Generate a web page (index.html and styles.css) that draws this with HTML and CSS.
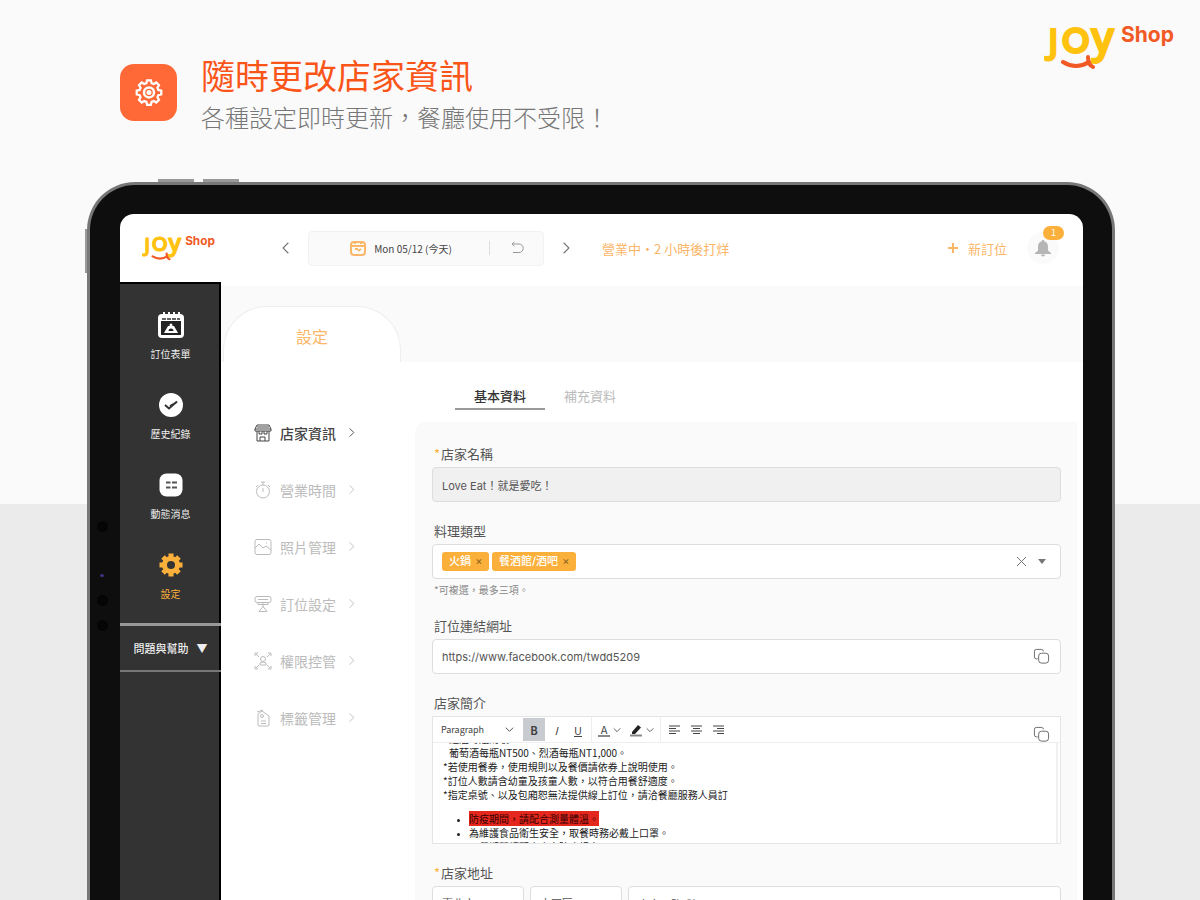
FILE: index.html
```
<!DOCTYPE html>
<html lang="zh-Hant">
<head>
  <meta charset="UTF-8">
  <meta name="viewport" content="width=device-width, initial-scale=1.0">
  <title>JOY Shop</title>
  <link rel="stylesheet" href="styles.css">
</head>
<body>
  <svg class="sprite" aria-hidden="true">
    <symbol id="logo" viewBox="0 0 132 46">
      <g class="logo-joy">
        <text x="4" y="30" font-size="35">J</text>
        <text class="logo-o" x="18" y="29" font-size="34">O</text>
        <text x="47" y="29" font-size="43">y</text>
      </g>
      <path class="logo-smile" d="M19 38 Q32 46 45 38 M44 33 Q44 41 49 43"/>
      <text class="logo-shop" x="77" y="18" font-size="21">Shop</text>
    </symbol>
    <symbol id="chevron" viewBox="0 0 12 12"><path d="M4 1.5 L8.5 6 L4 10.5"/></symbol>
    <symbol id="down" viewBox="0 0 12 12"><path d="M2 4 L6 8 L10 4"/></symbol>
    <symbol id="copy" viewBox="0 0 18 18">
      <path d="M5 11.500H3.500a2 2 0 0 1-2-2V3.500a2 2 0 0 1 2-2H9a2 2 0 0 1 2 2"/>
      <rect x="6" y="5.500" width="10.500" height="10.500" rx="3"/>
    </symbol>
  </svg>

  <header class="promo">
    <div class="promo-icon">
      <svg width="30" height="30" viewBox="0 0 24 24">
        <path d="M10.300 2h3.400l.6 2.600 1.900.8 2.300-1.400 2.400 2.400-1.400 2.300.8 1.900 2.600.6v3.400l-2.600.6-.8 1.900 1.400 2.300-2.400 2.400-2.300-1.400-1.900.8-.6 2.600h-3.400l-.6-2.600-1.900-.8-2.300 1.400-2.400-2.400 1.400-2.300-.8-1.900L1.100 14.600v-3.400l2.600-.6.8-1.900-1.400-2.300 2.400-2.400 2.300 1.400 1.900-.8z" transform="translate(1.200 0) scale(.9)"/>
        <circle cx="12" cy="11.500" r="4"/><circle cx="12" cy="11.500" r="1"/>
      </svg>
    </div>
    <div class="promo-text">
      <h1>隨時更改店家資訊</h1>
      <p>各種設定即時更新，餐廳使用不受限！</p>
    </div>
    <svg class="promo-logo" role="img" aria-label="JOY Shop"><use href="#logo"/></svg>
  </header>

  <div class="tablet">
    <i class="key key-one"></i><i class="key key-two"></i><i class="key key-side"></i>
    <i class="dot dot-one"></i><i class="dot dot-led"></i><i class="dot dot-two"></i><i class="dot dot-three"></i>

    <div class="screen">
      <div class="topbar">
        <svg class="topbar-logo" role="img" aria-label="JOY Shop"><use href="#logo"/></svg>
        <button class="arrow" aria-label="前一天"><svg class="flip" width="14" height="14"><use href="#chevron"/></svg></button>
        <div class="datebox">
          <button class="date">
            <svg width="16" height="16" viewBox="0 0 16 16"><rect x="1" y="2" width="14" height="13" rx="3"/><path d="M1 6h14M5 1v3M11 1v3M5 9h3M8 11l3-2"/></svg>
            Mon 05/12 (今天)
          </button>
          <button class="undo" aria-label="回到今天">
            <svg width="14" height="14" viewBox="0 0 14 14"><path d="M2 3h7a4 4 0 0 1 0 8.500H3M4.500 1 2 3l2.500 2.500"/></svg>
          </button>
        </div>
        <button class="arrow" aria-label="後一天"><svg width="14" height="14"><use href="#chevron"/></svg></button>
        <span class="status">營業中・2 小時後打烊</span>
        <button class="add"><svg width="10" height="10" viewBox="0 0 10 10"><path d="M5 0v10M0 5h10"/></svg>新訂位</button>
        <button class="bell" aria-label="通知">
          <svg width="18" height="18" viewBox="0 0 18 18"><path d="M9 1c.8 0 1.200.5 1.200 1.300C13 3 14 5 14 8v3.500l3 2.500v1H1v-1l3-2.500V8c0-3 1-5 3.800-5.700C7.800 1.500 8.200 1 9 1zM7 15.500h4a2 2 0 0 1-4 0z"/></svg>
          <span class="badge">1</span>
        </button>
      </div>

      <div class="body">
        <nav class="sidebar">
          <div class="sidebar-list">
            <a href="#book">
              <svg width="28" height="28" viewBox="0 0 28 28"><rect x="1" y="3" width="26" height="24" rx="4" fill="#fff"/><path d="M4 10h20v14H4z" fill="#222"/><path d="M7 1v6M12 1v6M17 1v6M22 1v6" stroke="#fff" stroke-width="2"/><path d="M5 8h4M10 8h4M15 8h4M20 8h3" stroke="#333" stroke-width="1.500"/><path d="M7 22h14l-4-7h-6z" fill="#fff"/><path d="M11.500 20a2.500 2.500 0 0 1 5 0z" fill="#222"/><circle cx="14" cy="14" r="1.500" fill="#fff"/></svg>
              訂位表單
            </a>
            <a href="#history">
              <svg width="28" height="28" viewBox="0 0 28 28"><circle cx="14" cy="14" r="12" fill="#fff"/><path d="M8 14l4 3.500 8-7M13 15l7-4" fill="none" stroke="#333" stroke-width="2"/></svg>
              歷史紀錄
            </a>
            <a href="#news">
              <svg width="28" height="28" viewBox="0 0 28 28"><rect x="2.500" y="2.500" width="23" height="23" rx="7" fill="#fff"/><path d="M9 11.500h4.500M15 11.500h5M9 16.500h4.500M15 16.500h5" stroke="#555" stroke-width="2"/></svg>
              動態消息
            </a>
            <a class="active" href="#settings">
              <svg width="28" height="28" viewBox="0 0 28 28"><path d="M14 2.500v5M14 20.500v5M2.500 14h5M20.500 14h5M6 6l3.500 3.500M18.500 18.500 22 22M6 22l3.500-3.500M18.500 9.500 22 6" stroke="#fbb03b" stroke-width="5"/><circle cx="14" cy="14" r="6.500" fill="none" stroke="#fbb03b" stroke-width="5"/></svg>
              設定
            </a>
          </div>
          <button class="help">問題與幫助 <span>▼</span></button>
        </nav>

        <main class="main">
          <div class="tabstrip"><h2>設定</h2></div>
          <div class="content">
            <nav class="menu">
              <a class="active" href="#info">
                <svg width="18" height="18" viewBox="0 0 18 18"><path d="M3 1h12l2 4v2H1V5zM3 7v10h12V7M1 5h16M5 7v3h3V7M10 7v3h3V7M6 17v-4h5v4M3 3h12"/></svg>
                店家資訊<svg class="chev" width="11" height="11"><use href="#chevron"/></svg>
              </a>
              <a href="#hours">
                <svg width="18" height="18" viewBox="0 0 18 18"><circle cx="9" cy="10.500" r="6.500"/><path d="M7 1h4M9 1v3M9 7v4M14 4l2 2M4 4 2 6"/></svg>
                營業時間<svg class="chev" width="11" height="11"><use href="#chevron"/></svg>
              </a>
              <a href="#photos">
                <svg width="18" height="18" viewBox="0 0 18 18"><rect x="1" y="1.500" width="16" height="15" rx="2"/><path d="M1 10l4-4 4 4 3-2 5 4M12 5h1"/></svg>
                照片管理<svg class="chev" width="11" height="11"><use href="#chevron"/></svg>
              </a>
              <a href="#booking">
                <svg width="18" height="18" viewBox="0 0 18 18"><rect x="1" y="1.500" width="16" height="6" rx="2"/><path d="M4 7.500v2h10v-2M9 8v4M5 16.500l4-5 4 5zM4 4.500h10"/></svg>
                訂位設定<svg class="chev" width="11" height="11"><use href="#chevron"/></svg>
              </a>
              <a href="#access">
                <svg width="18" height="18" viewBox="0 0 18 18"><path d="M2 2l3 3M16 2l-3 3M2 16l3-3M16 16l-3-3M1 4V1h3M14 1h3v3M1 14v3h3M14 17h3v-3M6 13v-2l3-1 3 1v2z"/><circle cx="9" cy="7" r="2.500"/></svg>
                權限控管<svg class="chev" width="11" height="11"><use href="#chevron"/></svg>
              </a>
              <a href="#tags">
                <svg width="18" height="18" viewBox="0 0 18 18"><path d="M4 5l4-3 7 5v9a1 1 0 0 1-1 1H5a1 1 0 0 1-1-1zM7 12h5M7 14.500h5M3 3l6-2"/><circle cx="8" cy="7" r="1.500"/></svg>
                標籤管理<svg class="chev" width="11" height="11"><use href="#chevron"/></svg>
              </a>
            </nav>

            <div class="panel">
              <div class="subtabs">
                <button class="active">基本資料</button>
                <button>補充資料</button>
              </div>

              <form class="form">
                <div class="field">
                  <label for="name"><em>*</em>店家名稱</label>
                  <input id="name" class="box" type="text" value="Love Eat！就是愛吃！" readonly>
                </div>

                <div class="field hinted">
                  <label for="type">料理類型</label>
                  <div class="box tags">
                    <span class="tag">火鍋 <button type="button" aria-label="移除火鍋">×</button></span>
                    <span class="tag">餐酒館/酒吧 <button type="button" aria-label="移除餐酒館/酒吧">×</button></span>
                    <input id="type" type="text">
                    <button type="button" class="clear" aria-label="清除"><svg width="11" height="11" viewBox="0 0 11 11"><path d="M1 1l9 9M10 1l-9 9"/></svg></button>
                    <button type="button" class="open" aria-label="展開"><svg width="10" height="6" viewBox="0 0 10 6"><path d="M1 0h8L5 5z"/></svg></button>
                  </div>
                  <small>*可複選，最多三項。</small>
                </div>

                <div class="field">
                  <label for="url">訂位連結網址</label>
                  <div class="box with-copy">
                    <input id="url" type="text" value="https://www.facebook.com/twdd5209">
                    <button type="button" class="copy" aria-label="複製"><svg width="17" height="17"><use href="#copy"/></svg></button>
                  </div>
                </div>

                <div class="field">
                  <label id="intro">店家簡介</label>
                  <div class="editor">
                    <div class="toolbar">
                      <button type="button" class="style">Paragraph <svg width="11" height="11"><use href="#down"/></svg></button>
                      <div class="group">
                        <button type="button" class="on"><b>B</b></button>
                        <button type="button"><i>I</i></button>
                        <button type="button"><u>U</u></button>
                      </div>
                      <div class="group colors">
                        <button type="button"><span class="ink">A</span><svg width="10" height="10"><use href="#down"/></svg></button>
                        <button type="button" aria-label="標示顏色"><svg class="pen" width="14" height="14" viewBox="0 0 14 14"><path d="M3 9l6-7 3 2.500L6 11H3z" fill="#222"/><path d="M1 12.500h12" stroke="#888" stroke-width="2"/></svg><svg width="10" height="10"><use href="#down"/></svg></button>
                      </div>
                      <div class="group last">
                        <button type="button" aria-label="靠左"><svg width="11" height="10" viewBox="0 0 11 10"><path d="M0 1h11M0 3.500h7M0 6h11M0 8.500h7"/></svg></button>
                        <button type="button" aria-label="置中"><svg width="11" height="10" viewBox="0 0 11 10"><path d="M0 1h11M2 3.500h7M0 6h11M2 8.500h7"/></svg></button>
                        <button type="button" aria-label="靠右"><svg width="11" height="10" viewBox="0 0 11 10"><path d="M0 1h11M4 3.500h7M0 6h11M4 8.500h7"/></svg></button>
                      </div>
                    </div>
                    <button type="button" class="copy" aria-label="複製"><svg width="17" height="17"><use href="#copy"/></svg></button>
                    <div class="editor-body" contenteditable="true" role="textbox" aria-labelledby="intro">
                      <p class="indent">紅酒每瓶酌收NT300。</p>
                      <p class="indent">葡萄酒每瓶NT500、烈酒每瓶NT1,000。</p>
                      <p>*若使用餐券，使用規則以及餐價請依券上說明使用。</p>
                      <p>*訂位人數請含幼童及孩童人數，以符合用餐舒適度。</p>
                      <p>*指定桌號、以及包廂恕無法提供線上訂位，請洽餐廳服務人員訂</p>
                      <ul>
                        <li><mark>防疫期間，請配合測量體溫。</mark></li>
                        <li>為維護食品衛生安全，取餐時務必戴上口罩。</li>
                        <li>用餐期間請配合店家防疫規定。</li>
                      </ul>
                    </div>
                  </div>
                </div>

                <div class="field">
                  <label for="city"><em>*</em>店家地址</label>
                  <div class="address">
                    <select id="city" class="box"><option>臺北市</option></select>
                    <select class="box" aria-label="區域"><option>大同區</option></select>
                    <input class="box" type="text" value="南京西路1號" aria-label="地址">
                  </div>
                </div>
              </form>
            </div>
          </div>
        </main>
      </div>
    </div>
  </div>
</body>
</html>
```
FILE: styles.css
```
* {
  box-sizing: border-box;
}

body {
  margin: 0;
  height: 100vh;
  overflow: hidden;
  display: flex;
  flex-direction: column;
  background: linear-gradient(#fafafa 56%, #ebebeb 56%);
  font-family: "Noto Sans CJK TC", sans-serif;
  color: #444;
}

h1, h2, p, ul {
  margin: 0;
  padding: 0;
  font-weight: 400;
}

a {
  text-decoration: none;
}

button, input, select {
  font: inherit;
  color: inherit;
  border: 0;
  padding: 0;
  background: none;
  outline: 0;
}

svg {
  flex: none;
  fill: none;
  stroke: currentColor;
}

.sprite {
  display: none;
}

/* logo */
.logo-joy {
  font-family: "Open Sans", sans-serif;
  font-weight: 600;
  fill: #ffc20e;
  stroke: #ffc20e;
  stroke-width: 2;
  stroke-linejoin: round;
}

.logo-o {
  font-family: Lato, sans-serif;
  font-weight: 700;
}

.logo-smile {
  stroke: #f15a24;
  stroke-width: 4;
  stroke-linecap: round;
}

.logo-shop {
  font-family: Inter, sans-serif;
  font-weight: 700;
  fill: #f15a24;
  stroke: none;
}

/* heading above the tablet */
.promo {
  display: flex;
  align-items: flex-start;
  flex: none;
  height: 182px;
  padding: 24px 24px 0 120px;
}

.promo-icon {
  display: grid;
  place-items: center;
  width: 57px;
  height: 57px;
  margin: 40px 24px 0 0;
  border-radius: 14px;
  background: #ff6937;
  color: #fff;
}

.promo-icon svg {
  stroke-width: 2;
}

.promo-text {
  flex: 1;
  padding-top: 28px;
}

.promo-text h1 {
  font-size: 34px;
  line-height: 46px;
  color: #fa5519;
}

.promo-text p {
  font-size: 24px;
  line-height: 38px;
  font-weight: 300;
  color: #777;
}

.promo-logo {
  width: 132px;
  height: 46px;
}

/* tablet */
.tablet {
  position: relative;
  flex: 1;
  min-height: 0;
  margin: 0 85px 0 87px;
  padding: 29px 29px 0 30px;
  border: 3px solid #777;
  border-bottom: 0;
  border-radius: 48px 48px 0 0;
  background: #0e0e0e;
}

.key {
  position: absolute;
  background: #999;
}

.key-one, .key-two {
  top: -6px;
  width: 36px;
  height: 3px;
}

.key-one {
  left: 68px;
}

.key-two {
  left: 113px;
}

.key-side {
  top: 44px;
  left: -5px;
  width: 2px;
  height: 44px;
}

.dot {
  position: absolute;
  left: 7px;
  width: 11px;
  height: 11px;
  border-radius: 50%;
  background: #050505;
}

.dot-one {
  top: 336px;
}

.dot-led {
  top: 389px;
  left: 10px;
  width: 4px;
  height: 3px;
  background: #3d3580;
}

.dot-two {
  top: 410px;
}

.dot-three {
  top: 435px;
}

.screen {
  display: flex;
  flex-direction: column;
  height: 100%;
  overflow: hidden;
  border-radius: 14px 14px 0 0;
  background: #fff;
}

/* top bar */
.topbar {
  display: flex;
  align-items: center;
  flex: none;
  height: 68px;
  padding: 0 24px 0 22px;
}

.topbar-logo {
  width: 74px;
  height: 26px;
  margin-right: 62px;
}

.arrow {
  display: grid;
  place-items: center;
  width: 16px;
  color: #777;
}

.flip {
  transform: scaleX(-1);
}

.datebox {
  display: flex;
  align-items: center;
  width: 236px;
  height: 35px;
  margin: 0 14px;
  border: 1px solid #f2f2f2;
  border-radius: 4px;
  background: #fafafa;
}

.date {
  display: flex;
  align-items: center;
  justify-content: center;
  gap: 8px;
  flex: 1;
  padding-left: 4px;
  font-size: 10px;
}

.date svg {
  color: #fbb668;
  stroke-width: 2;
}

.undo {
  width: 54px;
  height: 14px;
  border-left: 1px solid #ddd;
  color: #999;
  line-height: 0;
}

.status {
  flex: 1;
  margin-left: 28px;
  font-size: 13px;
  color: #fbb668;
}

.add {
  display: flex;
  align-items: center;
  gap: 10px;
  margin-right: 20px;
  font-size: 13px;
  color: #fbb668;
}

.add svg {
  stroke-width: 2;
}

.bell {
  position: relative;
  display: grid;
  place-items: center;
  width: 32px;
  height: 32px;
  border-radius: 50%;
  background: #fafafa;
}

.bell svg {
  fill: #b5b5b5;
  stroke: none;
}

.badge {
  position: absolute;
  top: -6px;
  right: -5px;
  width: 21px;
  border-radius: 7px;
  background: #fbb03b;
  color: #fff;
  font-size: 9px;
  line-height: 14px;
}

/* dark sidebar */
.body {
  display: flex;
  flex: 1;
  min-height: 0;
}

.sidebar {
  flex: none;
  width: 101px;
  border-top: 2px solid #000;
  box-shadow: inset -2px 0 #000;
  background: #333;
  color: #eee;
}

.sidebar-list {
  display: grid;
  gap: 28px;
  padding: 27px 0 20px;
}

.sidebar-list a {
  display: grid;
  justify-items: center;
  gap: 6px;
  font-size: 10px;
  line-height: 18px;
  color: #eee;
}

.sidebar-list svg {
  stroke: none;
}

.sidebar-list .active {
  color: #fbb03b;
}

.help {
  display: flex;
  align-items: center;
  justify-content: center;
  gap: 8px;
  width: 100%;
  height: 49px;
  border-top: 3px solid #999;
  border-bottom: 2px solid #777;
  font-size: 11px;
  font-weight: 500;
}

/* page */
.main {
  display: flex;
  flex-direction: column;
  flex: 1;
  min-width: 0;
  padding-top: 4px;
}

.tabstrip {
  flex: none;
  padding: 20px 0 0 2px;
  background: #fafafa;
}

.tabstrip h2 {
  width: 178px;
  height: 56px;
  border: 1px solid #eee;
  border-bottom: 0;
  border-radius: 44px 44px 0 0;
  background: #fff;
  font-size: 16px;
  line-height: 58px;
  text-align: center;
  color: #fbb668;
}

.content {
  display: flex;
  flex: 1;
  padding-right: 6px;
}

.menu {
  display: grid;
  align-content: start;
  flex: none;
  width: 194px;
  padding: 42px 0 0 33px;
}

.menu a {
  display: flex;
  align-items: center;
  gap: 8px;
  height: 57px;
  font-size: 14px;
  color: #bbb;
}

.menu .active {
  color: #444;
  font-weight: 500;
}

.menu .chev {
  margin-left: 2px;
}

.panel {
  flex: 1;
  min-width: 0;
}

.subtabs {
  display: flex;
  height: 60px;
  padding: 22px 40px 12px;
}

.subtabs button {
  width: 90px;
  border-bottom: 2px solid transparent;
  font-size: 13px;
  line-height: 24px;
  color: #bbb;
}

.subtabs .active {
  border-color: #999;
  color: #333;
  font-weight: 500;
}

.form {
  padding: 19px 16px 0 17px;
  border-radius: 10px 0 0 0;
  background: #fafafa;
}

.field {
  margin-bottom: 16px;
}

.hinted {
  margin-bottom: 12px;
}

.field label {
  display: block;
  padding-left: 2px;
  font-size: 13px;
  line-height: 26px;
  color: #555;
}

.field em {
  margin-right: 1px;
  font-style: normal;
  color: #fbb03b;
}

.field small {
  display: block;
  padding-left: 2px;
  font-size: 10px;
  line-height: 22px;
  color: #888;
}

.box {
  display: flex;
  align-items: center;
  width: 100%;
  height: 35px;
  padding: 0 9px;
  border: 1px solid #ddd;
  border-radius: 4px;
  background: #fff;
  font-family: Inter, "Noto Sans CJK TC", sans-serif;
  font-size: 11px;
  color: #555;
}

.box[readonly] {
  background: #f0f0f0;
}

.box input {
  flex: 1;
  min-width: 0;
}

.tags {
  gap: 3px;
}

.tag {
  padding: 0 5px 0 7px;
  border-radius: 3px;
  background: #fbb03b;
  color: #fff;
  line-height: 19px;
  font-weight: 500;
}

.tag button {
  width: 10px;
  color: #8a6420;
  font-weight: 400;
}

.clear, .open {
  display: grid;
  place-items: center;
  width: 18px;
  color: #777;
}

.open svg {
  fill: #777;
  stroke: none;
}

.copy {
  color: #666;
  line-height: 0;
}

/* text editor */
.editor {
  position: relative;
  height: 128px;
  display: flex;
  flex-direction: column;
  border: 1px solid #e5e5e5;
  background: #fff;
}

.editor .copy {
  position: absolute;
  top: 9px;
  right: 10px;
}

.with-copy .copy {
  margin-right: 1px;
}

.toolbar {
  display: flex;
  flex: none;
  height: 26px;
  border-bottom: 1px solid #eee;
  font-size: 11px;
  line-height: 24px;
}

.toolbar button {
  display: flex;
  align-items: center;
  justify-content: center;
  width: 22px;
}

.toolbar .style {
  justify-content: space-between;
  width: 88px;
  padding: 0 6px 0 8px;
  font-size: 9px;
}

.group {
  display: flex;
  padding: 1px 2px;
  border-right: 1px solid #eee;
}

.last {
  border: 0;
}

.toolbar .on {
  background: #c8ccd1;
}

.toolbar .colors button {
  width: 32px;
  gap: 2px;
}

.ink {
  width: 12px;
  border-bottom: 2px solid #888;
  line-height: 12px;
}

.pen {
  stroke: none;
}

.editor-body {
  flex: 1;
  overflow: hidden;
  margin-right: 2px;
  padding-left: 10px;
  border-right: 2px solid #f0f0f0;
  font-size: 10px;
  line-height: 14px;
  color: #222;
  outline: 0;
}

.editor-body p:first-child {
  margin-top: -11px;
}

.indent {
  padding-left: 6px;
}

.editor-body ul {
  margin-top: 10px;
  padding-left: 26px;
}

.editor-body li::marker {
  font-size: 7px;
}

.editor-body mark {
  background: #e5281e;
  color: #300;
}

.address {
  display: flex;
  gap: 6px;
}

.address select {
  flex: none;
  width: 92px;
  appearance: none;
}
```
